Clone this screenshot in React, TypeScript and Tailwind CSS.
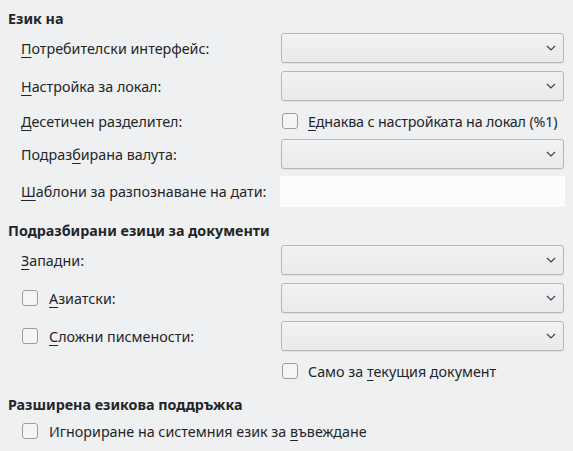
import React from "react";

const U = ({ children }: { children: React.ReactNode }) => (
  <span className="underline decoration-1 underline-offset-[3px]">{children}</span>
);

const Combo = () => (
  <div className="w-[283px] h-[30px] rounded-[3px] border border-[#b4b6b8] bg-gradient-to-b from-[#f1f2f3] to-[#e9eaeb] shadow-[0_1px_0_rgba(0,0,0,0.06)] flex items-center justify-end pr-[7px]">
    <svg width="10" height="6" viewBox="0 0 10 6" fill="none">
      <path d="M1 1l4 4 4-4" stroke="#3b3e41" strokeWidth="1.1" />
    </svg>
  </div>
);

const Check = () => (
  <div className="w-4 h-4 rounded-[3px] border border-[#9c9ea0] bg-[#f4f5f5] shrink-0" />
);

const Label = ({ children }: { children: React.ReactNode }) => (
  <div className="w-[260px] pl-[21px] shrink-0 whitespace-nowrap">{children}</div>
);

export default function App() {
  return (
    <div
      className="w-[573px] h-[451px] bg-[#eff0f1] text-[#232629] text-[14.3px] leading-[19px] pt-[8px] overflow-hidden whitespace-nowrap"
      style={{ fontFamily: '"Noto Sans", sans-serif' }}
    >
      <div className="pl-[8px] h-[20px] flex items-center font-bold">Език на</div>

      <div className="flex items-center h-[30px] mt-[5px]">
        <Label>
          <U>П</U>отребителски интерфейс:
        </Label>
        <div className="ml-[21px]"><Combo /></div>
      </div>
      <div className="flex items-center h-[30px] mt-[8px]">
        <Label>
          <U>Н</U>астройка за локал:
        </Label>
        <div className="ml-[21px]"><Combo /></div>
      </div>
      <div className="flex items-center h-[24px] mt-[8px]">
        <Label>
          <U>Д</U>есетичен разделител:
        </Label>
        <div className="ml-[22px] flex items-center gap-[10px]">
          <Check />
          <span className="tracking-[-0.15px]">
            <U>Е</U>днаква с настройката на локал (%1)
          </span>
        </div>
      </div>
      <div className="flex items-center h-[30px] mt-[6px]">
        <Label>
          Подраз<U>б</U>ирана валута:
        </Label>
        <div className="ml-[21px]"><Combo /></div>
      </div>
      <div className="flex items-center h-[31px] mt-[7px]">
        <Label>
          <U>Ш</U>аблони за разпознаване на дати:
        </Label>
        <div className="ml-[20px] w-[285px] h-[31px] bg-[#fcfcfc]" />
      </div>

      <div className="pl-[8px] h-[20px] flex items-center font-bold mt-[13px]">
        Подразбирани езици за документи
      </div>

      <div className="flex items-center h-[30px] mt-[5px]">
        <Label>
          <U>З</U>ападни:
        </Label>
        <div className="ml-[21px]"><Combo /></div>
      </div>
      <div className="flex items-center h-[30px] mt-[8px]">
        <div className="w-[281px] pl-[22px] flex items-center gap-[11px] shrink-0">
          <Check />
          <span>
            <U>А</U>зиатски:
          </span>
        </div>
        <Combo />
      </div>
      <div className="flex items-center h-[30px] mt-[8px]">
        <div className="w-[281px] pl-[22px] flex items-center gap-[11px] shrink-0">
          <Check />
          <span>
            <U>С</U>ложни писмености:
          </span>
        </div>
        <Combo />
      </div>
      <div className="flex items-center h-[22px] mt-[9px] pl-[282px] gap-[10px]">
        <Check />
        <span>
          Само за <U>т</U>екущия документ
        </span>
      </div>

      <div className="pl-[8px] h-[20px] flex items-center font-bold mt-[12px]">
        Разширена езикова поддръжка
      </div>
      <div className="flex items-center h-[24px] mt-[5px] pl-[22px] gap-[11px]">
        <Check />
        <span>
          Игнориране на системния език за <U>в</U>ъвеждане
        </span>
      </div>
    </div>
  );
}
